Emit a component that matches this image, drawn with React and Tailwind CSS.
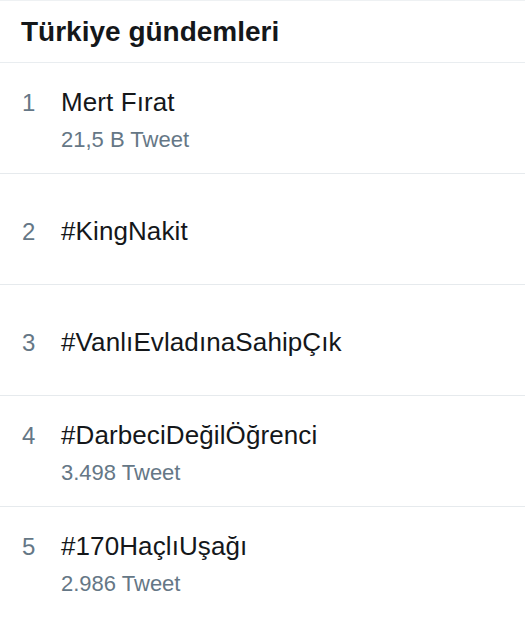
import React from "react";

const trends = [
  { rank: 1, name: "Mert Fırat", count: "21,5 B Tweet" },
  { rank: 2, name: "#KingNakit" },
  { rank: 3, name: "#VanlıEvladınaSahipÇık" },
  { rank: 4, name: "#DarbeciDeğilÖğrenci", count: "3.498 Tweet" },
  { rank: 5, name: "#170HaçlıUşağı", count: "2.986 Tweet" },
];

const App = () => {
  return (
    <div className="w-[525px] h-[619px] overflow-hidden bg-white font-['Liberation_Sans',Arial,sans-serif] border-t border-[#eef1f3]">
      <div className="h-[62px] flex items-center px-[21px] border-b border-[#e9edf0]">
        <h2 className="text-[28px] leading-none font-bold text-[#14171a] pt-[1px]">Türkiye gündemleri</h2>
      </div>
      {trends.map((t) => (
        <div key={t.rank} className="h-[111px] flex items-center px-[22px] pt-[3px] border-b border-[#e6eaed] last:border-b-0">
          <div className="flex flex-col">
            <div className="flex items-baseline leading-none">
              <span className="w-[39px] text-[24px] text-[#657786]">{t.rank}</span>
              <span className="text-[26px] text-[#14171a] tracking-[0.1px]">{t.name}</span>
            </div>
            {t.count && (
              <div className="pl-[39px] mt-[14px] leading-none text-[22px] text-[#657786]">{t.count}</div>
            )}
          </div>
        </div>
      ))}
    </div>
  );
};

export default App;
